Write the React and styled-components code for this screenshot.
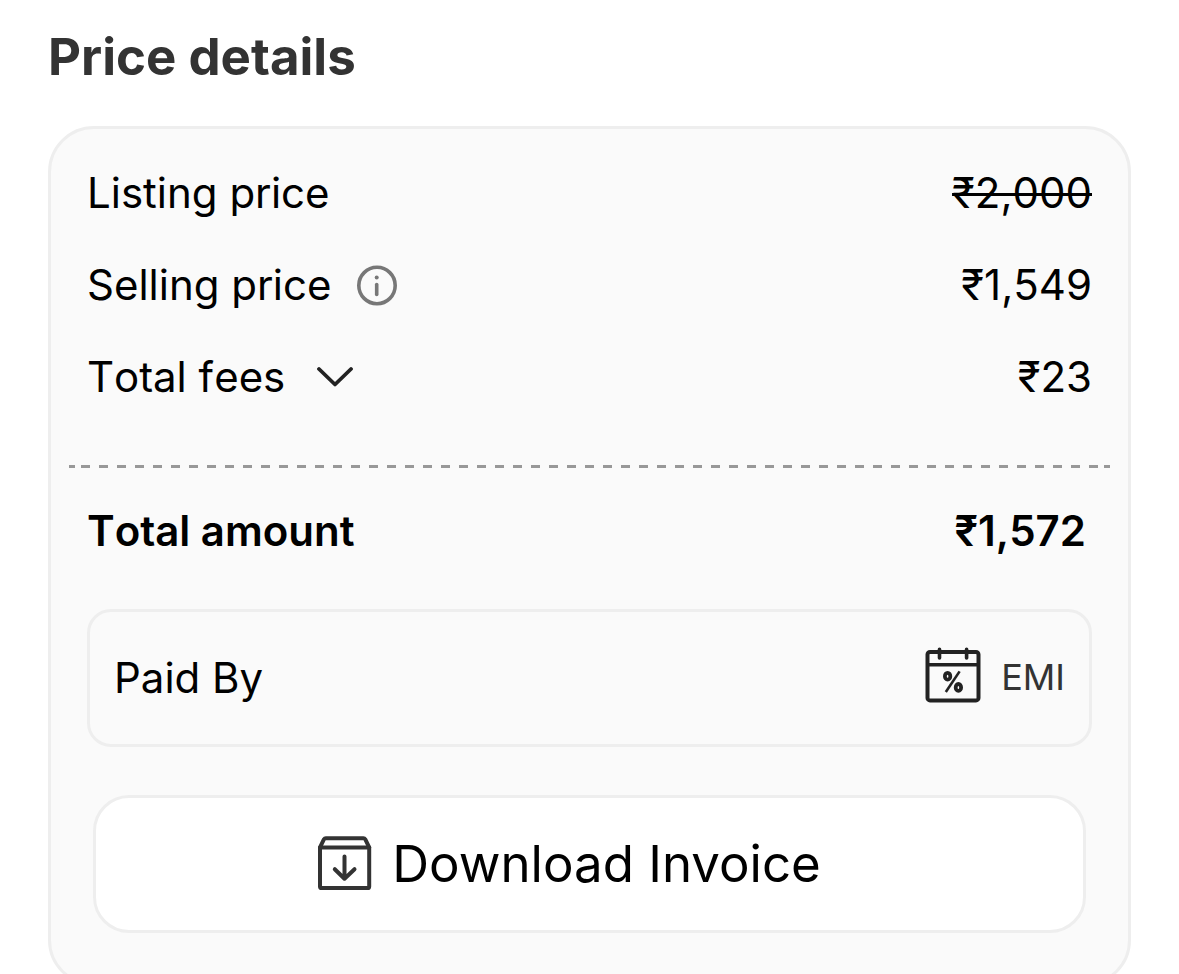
import styled, { createGlobalStyle, ThemeProvider } from "styled-components"
import { useState } from "react";

const theme = {
    bg: "#ffffff",
    card: "#fafafa",
    border: "#eeeeee",
    heading: "#333333",
    text: "#000000",
    icon: "#222222",
    muted: "#777777",
    dash: "#989898",
}

const GlobalStyle = createGlobalStyle`
    * {
        box-sizing: border-box;
    }
    body {
        margin: 0;
        background: ${({ theme }) => theme.bg};
        font-family: Inter, "Liberation Sans", sans-serif;
        color: ${({ theme }) => theme.text};
    }
    svg {
        display: block;
        flex: none;
    }
`

const Page = styled.main`
    padding: 24px 48px 32px;
`;

const Title = styled.h2`
    margin: 0 0 36px;
    font-size: 51px;
    line-height: 66px;
    font-weight: 700;
    color: ${({ theme }) => theme.heading};
`;

const Card = styled.section`
    display: flex;
    flex-direction: column;
    padding: 38px 36px 50px;
    background: ${({ theme }) => theme.card};
    border: 3px solid ${({ theme }) => theme.border};
    border-radius: 46px;
    font-kerning: none;
`;

const Rows = styled.div`
    display: flex;
    flex-direction: column;
    gap: 40px;
`;

const Row = styled.div`
    display: flex;
    align-items: center;
    justify-content: space-between;
    font-size: 42px;
    line-height: 52px;
    font-weight: ${({ $total }) => ($total ? 600 : 400)};
    padding-right: ${({ $total }) => ($total ? "6px" : "0")};
`;

const Label = styled.div`
    display: flex;
    align-items: center;
    gap: 24px;
`;

const PlainButton = styled.button`
    display: flex;
    align-items: center;
    gap: 32px;
    padding: 0;
    border: none;
    background: none;
    font: inherit;
    font-kerning: inherit;
    color: inherit;
    cursor: pointer;
`;

const OldPrice = styled.s`
    text-decoration-thickness: 3px;
`;

const Divider = styled.hr`
    align-self: stretch;
    height: 3px;
    margin: 62px -18px 37px;
    border: none;
    background:
        linear-gradient(${({ theme }) => theme.dash} 0 0) left / 6px 100% no-repeat,
        linear-gradient(${({ theme }) => theme.dash} 0 0) right / 6px 100% no-repeat,
        repeating-linear-gradient(
            to right,
            ${({ theme }) => theme.dash} 0 3px,
            transparent 3px 12px,
            ${({ theme }) => theme.dash} 12px 18px
        );
`;

const PaidBox = styled.div`
    display: flex;
    align-items: center;
    justify-content: space-between;
    height: 138px;
    margin-top: 52px;
    padding: 0 24px 2px;
    border: 3px solid ${({ theme }) => theme.border};
    border-radius: 24px;
    font-size: 42px;
`;

const Method = styled.div`
    display: flex;
    align-items: center;
    gap: 20px;
    font-size: 36px;
    color: ${({ theme }) => theme.heading};
`;

const InvoiceButton = styled.button`
    display: flex;
    align-items: center;
    justify-content: center;
    gap: 20px;
    height: 138px;
    margin: 48px 6px 0;
    padding: 0 40px 2px 0;
    background: ${({ theme }) => theme.bg};
    border: 3px solid ${({ theme }) => theme.border};
    border-radius: 36px;
    font-family: inherit;
    font-size: 51px;
    font-kerning: normal;
    color: inherit;
    cursor: pointer;
`;

const InfoIcon = () => (
    <svg width="42" height="42" viewBox="0 0 42 42" fill="none" aria-hidden="true">
        <circle cx="21" cy="21.5" r="18.2" stroke={theme.muted} strokeWidth="3.6" />
        <circle cx="20.7" cy="13.5" r="2" fill={theme.muted} />
        <path d="M20.7 20.5v10" stroke={theme.muted} strokeWidth="3.6" strokeLinecap="round" />
    </svg>
)

const Chevron = ({ open }) => (
    <svg width="36" height="22" viewBox="0 0 36 22" fill="none" aria-hidden="true">
        <path
            d={open ? "M2 18.500L18 3L34 18.500" : "M2 3L18 18.500L34 3"}
            stroke={theme.icon}
            strokeWidth="3.8"
            strokeLinecap="round"
            strokeLinejoin="round"
        />
    </svg>
)

const EmiIcon = () => (
    <svg width="56" height="60" viewBox="0 0 56 60" fill="none" stroke={theme.icon} strokeWidth="4" aria-hidden="true">
        <rect x="2.5" y="5" width="51" height="48.4" rx="2.5" />
        <path d="M2.5 17.7h51" strokeWidth="3.4" />
        <path d="M14.5 2.2v8.8M41.6 2.2v8.8" strokeWidth="3.6" strokeLinecap="round" />
        <ellipse cx="22.6" cy="29.2" rx="2.7" ry="3.4" strokeWidth="3.8" />
        <ellipse cx="33.4" cy="40.4" rx="2.7" ry="3.4" strokeWidth="3.8" />
        <path d="M20.8 45L34.6 24.4" strokeWidth="2.6" />
    </svg>
)

const InvoiceIcon = () => (
    <svg
        width="54"
        height="54"
        viewBox="0 0 54 54"
        fill="none"
        stroke={theme.heading}
        strokeWidth="4"
        strokeLinecap="round"
        strokeLinejoin="round"
        aria-hidden="true"
    >
        <path d="M2 11.4h49.2v39a1.6 1.6 0 0 1-1.6 1.6H3.6A1.6 1.6 0 0 1 2 50.4z" />
        <path d="M2 11.4L6 3.2Q6.6 2.2 7.8 2.2H45.4Q46.6 2.2 47.2 3.2L51.2 11.4" />
        <path d="M26.5 20.5V42.5M16.8 33.2L26.5 42.7L36.5 33.2" />
    </svg>
)

const App = () => {
    const [open, setOpen] = useState(false);
    return (
        <ThemeProvider theme={theme}>
            <GlobalStyle />
            <Page>
                <Title>Price details</Title>
                <Card>
                    <Rows>
                        <Row>
                            <Label>Listing price</Label>
                            <OldPrice>₹2,000</OldPrice>
                        </Row>
                        <Row>
                            <Label>
                                Selling price
                                <PlainButton type="button" aria-label="About selling price">
                                    <InfoIcon />
                                </PlainButton>
                            </Label>
                            <span>₹1,549</span>
                        </Row>
                        <Row>
                            <PlainButton type="button" aria-expanded={open} onClick={() => setOpen(!open)}>
                                Total fees
                                <Chevron open={open} />
                            </PlainButton>
                            <span>₹23</span>
                        </Row>
                    </Rows>
                    <Divider />
                    <Row $total>
                        <span>Total amount</span>
                        <span>₹1,572</span>
                    </Row>
                    <PaidBox>
                        <span>Paid By</span>
                        <Method>
                            <EmiIcon />
                            EMI
                        </Method>
                    </PaidBox>
                    <InvoiceButton type="button">
                        <InvoiceIcon />
                        Download Invoice
                    </InvoiceButton>
                </Card>
            </Page>
        </ThemeProvider>
    )
}

export default App
